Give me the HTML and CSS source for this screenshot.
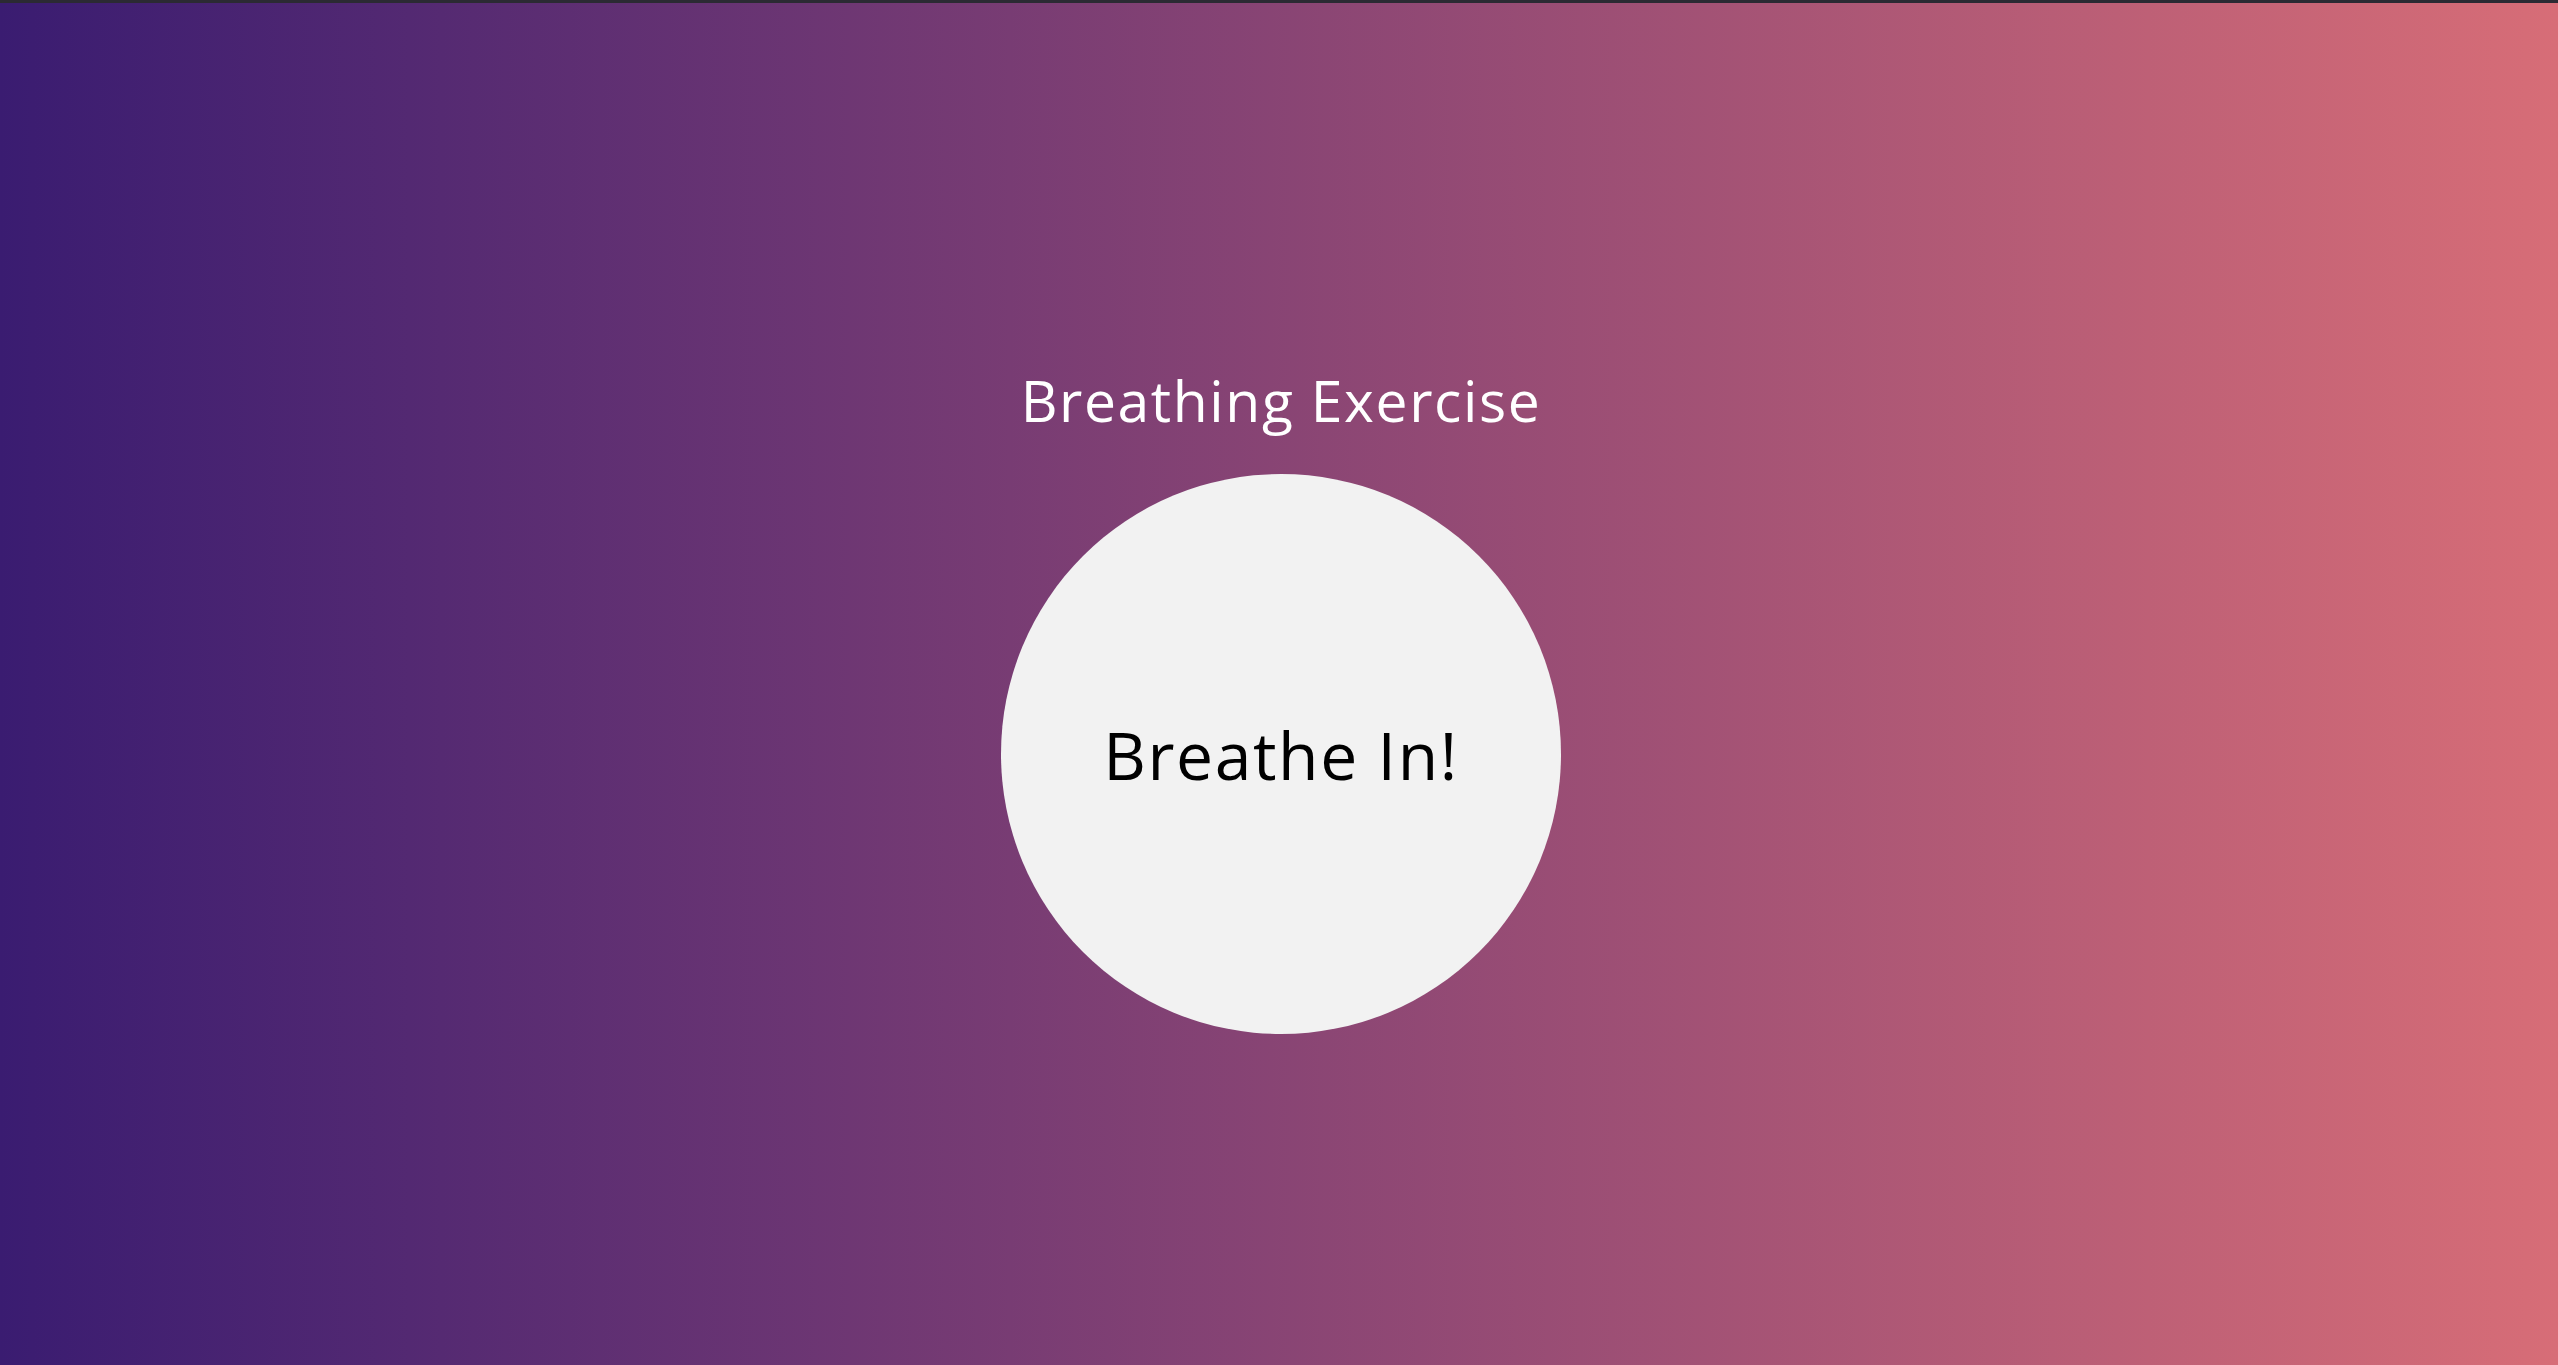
FILE: index.html
```html
<!DOCTYPE html>
<html lang="en">
<head>
<meta charset="utf-8">
<title>Breathing Exercise</title>
<link rel="stylesheet" href="styles.css">
</head>
<body>
<main class="app">
  <h1 class="title">Breathing Exercise</h1>
  <div class="circle">
    <p class="prompt">Breathe In!</p>
  </div>
</main>
</body>
</html>
```

FILE: styles.css
```css
* { box-sizing: border-box; }
html, body { height: 100%; }
body {
  margin: 0;
  border-top: 3px solid #2b2a33;
  padding-top: 32px;
  background: linear-gradient(to right, #3a1c71, #d76d77);
  font-family: "Open Sans", "Liberation Sans", sans-serif;
  display: flex;
  align-items: center;
  justify-content: center;
}
.app {
  display: flex;
  flex-direction: column;
  align-items: center;
  margin-left: 4px;
}
.title {
  margin: 0 0 40px;
  color: #ffffff;
  font-weight: 400;
  font-size: 57px;
  line-height: 1.2;
  letter-spacing: 1.6px;
}
.circle {
  width: 560px;
  height: 560px;
  border-radius: 50%;
  background: #f2f2f2;
  display: flex;
  align-items: center;
  justify-content: center;
}
.prompt {
  margin: 0;
  color: #000;
  font-size: 66px;
  letter-spacing: 1.6px;
}
```
